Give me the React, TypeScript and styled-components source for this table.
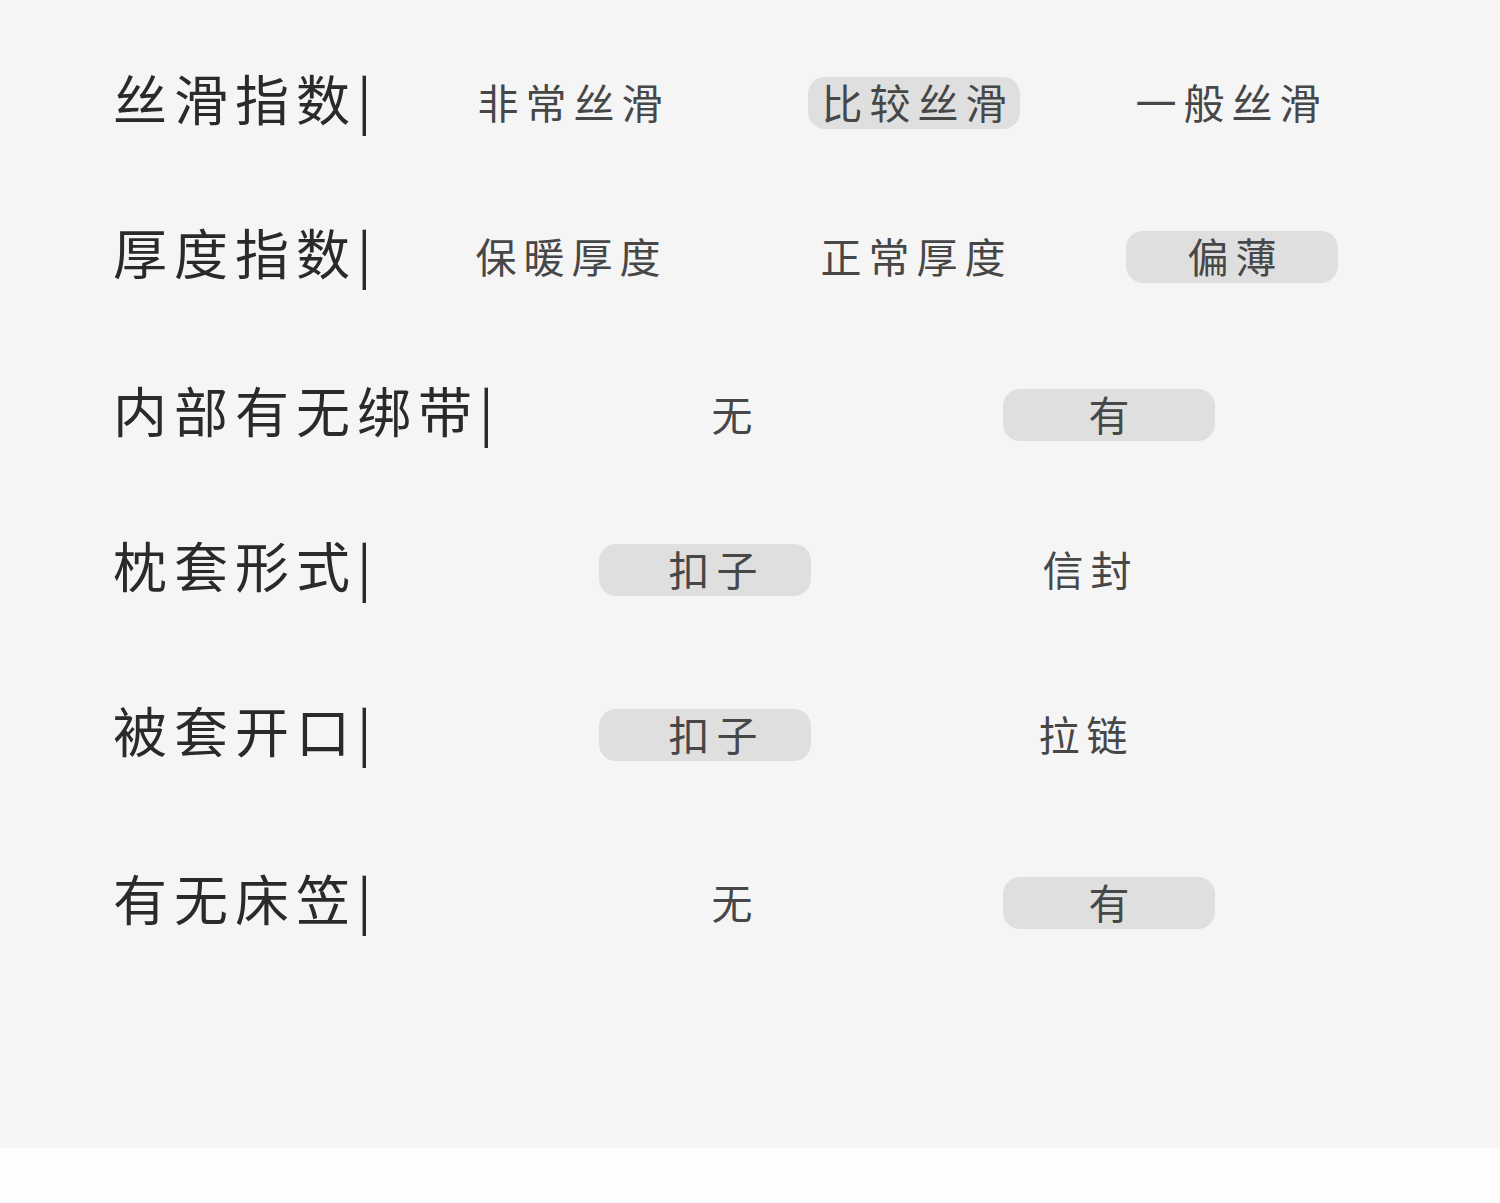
import React from "react";
import styled, { createGlobalStyle } from "styled-components";

const Global = createGlobalStyle`
  html, body { margin: 0; padding: 0; background: #fdfdfd; }
  body { font-family: "Noto Sans CJK SC", "Noto Sans", sans-serif; }
`;

const Panel = styled.main`
  background: #f5f5f5;
  height: 1148px;
  padding: 77px 0 0 113px;
  box-sizing: border-box;
  display: flex;
  flex-direction: column;
`;

const Row = styled.section<{ $mt: number }>`
  display: flex;
  align-items: center;
  height: 52px;
  margin-top: ${(p) => p.$mt}px;
`;

const Label = styled.h2`
  flex: none;
  width: 351px;
  margin: 0 0 10px;
  white-space: nowrap;
  font-size: 54px;
  font-weight: 400;
  letter-spacing: 7px;
  color: #2a2a2a;
  line-height: 54px;
`;

const Option = styled.span<{ $w: number; $ml: number; $on?: boolean; $dx?: number }>`
  flex: none;
  box-sizing: border-box;
  width: ${(p) => p.$w}px;
  height: 52px;
  margin-left: ${(p) => p.$ml}px;
  border-radius: 17px;
  background: ${(p) => (p.$on ? "#dfdfdf" : "transparent")};
  display: flex;
  align-items: center;
  justify-content: center;
  padding-left: ${(p) => (p.$dx ?? 0) * 2}px;
  padding-bottom: 4px;
  font-size: 41px;
  line-height: 41px;
  letter-spacing: 7px;
  text-indent: 7px;
  color: #474747;
  white-space: nowrap;
`;

type Opt = { t: string; l: number; on?: boolean; dx?: number };
type RowData = { label: string; mt: number; opts: Opt[] };

const rows: RowData[] = [
  {
    label: "丝滑指数|",
    mt: 0,
    opts: [
      { t: "非常丝滑", l: 464 },
      { t: "比较丝滑", l: 808, on: true },
      { t: "一般丝滑", l: 1122 },
    ],
  },
  {
    label: "厚度指数|",
    mt: 102,
    opts: [
      { t: "保暖厚度", l: 462 },
      { t: "正常厚度", l: 807 },
      { t: "偏薄", l: 1126, on: true },
    ],
  },
  {
    label: "内部有无绑带|",
    mt: 106,
    opts: [
      { t: "无", l: 626 },
      { t: "有", l: 1003, on: true },
    ],
  },
  {
    label: "枕套形式|",
    mt: 103,
    opts: [
      { t: "扣子", l: 599, on: true, dx: 8 },
      { t: "信封", l: 981 },
    ],
  },
  {
    label: "被套开口|",
    mt: 113,
    opts: [
      { t: "扣子", l: 599, on: true, dx: 8 },
      { t: "拉链", l: 977 },
    ],
  },
  {
    label: "有无床笠|",
    mt: 116,
    opts: [
      { t: "无", l: 626 },
      { t: "有", l: 1003, on: true },
    ],
  },
];

const W = 212;
const START = 113 + 351;

export default function App() {
  return (
    <>
      <Global />
      <Panel>
        {rows.map((r) => {
          let cur = START;
          return (
            <Row key={r.label} $mt={r.mt}>
              <Label>{r.label}</Label>
              {r.opts.map((o) => {
                const ml = o.l - cur;
                cur = o.l + W;
                return (
                  <Option key={o.t} $w={W} $ml={ml} $on={o.on} $dx={o.dx}>
                    {o.t}
                  </Option>
                );
              })}
            </Row>
          );
        })}
      </Panel>
    </>
  );
}
